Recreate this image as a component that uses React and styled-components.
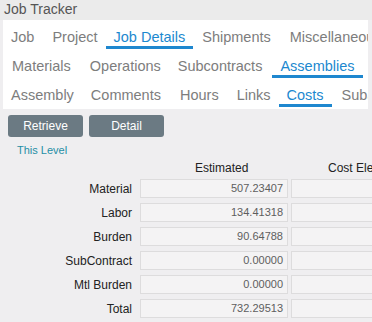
import React from "react"
import styled, { createGlobalStyle } from "styled-components"

const GlobalStyle = createGlobalStyle`
    html, body {
        margin: 0;
        padding: 0;
        background: #efeef0;
        font-family: "Liberation Sans", Arial, sans-serif;
        overflow: hidden;
    }
`

const Page = styled.div`
    width: 372px;
    height: 322px;
    overflow: hidden;
    background: #efeef0;
`

const TitleBar = styled.div`
    height: 20px;
    line-height: 19px;
    padding-left: 4px;
    font-size: 14px;
    color: #555;
    background: #ebebeb;
    white-space: nowrap;
`

const TabPanel = styled.div`
    margin: 0 4px 0 3px;
    height: 89px;
    background: #ffffff;
    overflow: hidden;
`

const TabRow = styled.div`
    display: flex;
    height: 29px;
    padding-left: ${p => p.indent || 0}px;
    white-space: nowrap;
`

const Tab = styled.div`
    flex: none;
    padding: 9px 8px 0;
    margin-right: ${p => p.gap || 0}px;
    font-size: 14.5px;
    line-height: 17px;
    color: ${p => (p.active ? "#1c88cf" : "#7d7d7d")};
    border-bottom: 3px solid ${p => (p.active ? "#1e87cf" : "transparent")};
`

const Content = styled.div`
    padding: 6px 0 0 8px;
`

const ButtonBar = styled.div`
    display: flex;
    gap: 6px;
`

const Button = styled.button`
    width: 75px;
    height: 22px;
    border: none;
    border-radius: 3px;
    background: #6b7a83;
    color: #ffffff;
    font-family: "Liberation Sans", Arial, sans-serif;
    font-size: 12px;
    padding: 0;
`

const LevelLink = styled.div`
    margin: 7px 0 0 9px;
    font-size: 11px;
    line-height: 13px;
    color: #1f8ea6;
`

const CostGrid = styled.div`
    margin: 4px 0 0 -8px;
    display: grid;
    grid-template-columns: 137px 148px 120px;
    column-gap: 3px;
    row-gap: 5px;
    align-items: center;
`

const ColHead = styled.div`
    font-size: 12px;
    line-height: 14px;
    color: #222;
    padding-left: ${p => p.indent || 0}px;
    white-space: nowrap;
    margin-bottom: -1px;
`

const Label = styled.div`
    text-align: right;
    padding-right: 5px;
    font-size: 12px;
    color: #222;
`

const Field = styled.div`
    box-sizing: border-box;
    height: 19px;
    line-height: 17px;
    padding-right: 4px;
    text-align: right;
    font-size: 11px;
    color: #5e5e5e;
    background: #f4f3f4;
    border: 1px solid #dddcdd;
`

const rows = [
    ["Material", "507.23407"],
    ["Labor", "134.41318"],
    ["Burden", "90.64788"],
    ["SubContract", "0.00000"],
    ["Mtl Burden", "0.00000"],
    ["Total", "732.29513"],
]

export default function App() {
    return (
        <Page>
            <GlobalStyle />
            <TitleBar>Job Tracker</TitleBar>
            <TabPanel>
                <TabRow>
                    <Tab gap={2}>Job</Tab>
                    <Tab>Project</Tab>
                    <Tab active gap={1}>Job Details</Tab>
                    <Tab gap={3}>Shipments</Tab>
                    <Tab>Miscellaneous</Tab>
                </TabRow>
                <TabRow indent={1}>
                    <Tab gap={3}>Materials</Tab>
                    <Tab gap={1}>Operations</Tab>
                    <Tab gap={2}>Subcontracts</Tab>
                    <Tab active>Assemblies</Tab>
                </TabRow>
                <TabRow>
                    <Tab gap={1}>Assembly</Tab>
                    <Tab gap={3}>Comments</Tab>
                    <Tab gap={2}>Hours</Tab>
                    <Tab gap={0}>Links</Tab>
                    <Tab active gap={2}>Costs</Tab>
                    <Tab>Subassemblies</Tab>
                </TabRow>
            </TabPanel>
            <Content>
                <ButtonBar>
                    <Button>Retrieve</Button>
                    <Button>Detail</Button>
                </ButtonBar>
                <LevelLink>This Level</LevelLink>
                <CostGrid>
                    <div />
                    <ColHead indent={55}>Estimated</ColHead>
                    <ColHead indent={37}>Cost Elements</ColHead>
                    {rows.map(([name, value]) => (
                        <React.Fragment key={name}>
                            <Label>{name}</Label>
                            <Field>{value}</Field>
                            <Field />
                        </React.Fragment>
                    ))}
                </CostGrid>
            </Content>
        </Page>
    )
}
